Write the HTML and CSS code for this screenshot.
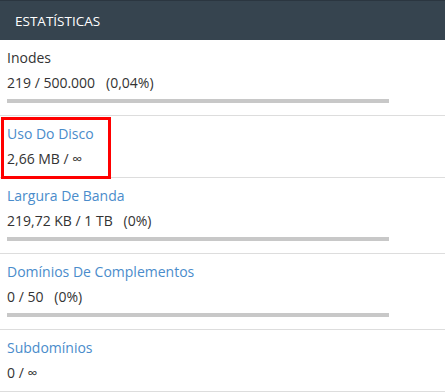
FILE: index.html
```html
<!DOCTYPE html>
<html lang="pt">
  <head>
    <meta charset="UTF-8" />
    <title>Estatísticas</title>
    <link rel="stylesheet" href="styles.css">
  </head>
  <body>
    <div class="stats-panel">
      <div class="stats-header">Estatísticas</div>

      <div class="stat-row">
        <div class="stat-title">Inodes</div>
        <div class="stat-value">219 / 500.000   (0,04%)</div>
        <div class="stat-bar"><div class="stat-fill" style="width: 0%"></div></div>
      </div>

      <div class="stat-row">
        <div class="stat-highlight">
          <a class="stat-title link" href="#">Uso Do Disco</a>
          <div class="stat-value">2,66 MB / ∞</div>
        </div>
      </div>

      <div class="stat-row">
        <a class="stat-title link" href="#">Largura De Banda</a>
        <div class="stat-value">219,72 KB / 1 TB   (0%)</div>
        <div class="stat-bar"><div class="stat-fill" style="width: 0%"></div></div>
      </div>

      <div class="stat-row">
        <a class="stat-title link" href="#">Domínios De Complementos</a>
        <div class="stat-value">0 / 50   (0%)</div>
        <div class="stat-bar"><div class="stat-fill" style="width: 0%"></div></div>
      </div>

      <div class="stat-row">
        <a class="stat-title link" href="#">Subdomínios</a>
        <div class="stat-value">0 / ∞</div>
      </div>
    </div>
  </body>
</html>
```

FILE: styles.css
```css
/* Base */
body { margin: 0; background-color: #fff; font-family: "Open Sans", "Liberation Sans", sans-serif; font-size: 14px; color: #333; }

/* Panel */
.stats-panel { display: flex; flex-direction: column; }
.stats-header { height: 40px; box-sizing: border-box; padding: 0 15px; display: flex; align-items: center; background-color: #36444f; border-top: 1px solid #2b3640; color: #fff; font-size: 13.5px; text-transform: uppercase; }

/* Rows */
.stat-row { display: flex; flex-direction: column; align-items: flex-start; padding: 8px 7px 8px; border-bottom: 1px solid #ddd; }
.stat-title { display: block; line-height: 20px; color: #333; text-decoration: none; }
.stat-title.link { color: #4a8ccb; }
.stat-value { line-height: 20px; margin-top: 5px; white-space: pre; }

/* Usage bar */
.stat-bar { width: 382px; height: 4px; margin-top: 6px; margin-bottom: 4px; background-color: #c8c8c8; }
.stat-fill { height: 100%; background-color: #4a8ccb; }

/* Highlight box */
.stat-highlight { margin: -7px 0 -10px -6px; padding: 4px 3px 7px; border: 3px solid #f00; width: 110px; box-sizing: border-box; }
```
